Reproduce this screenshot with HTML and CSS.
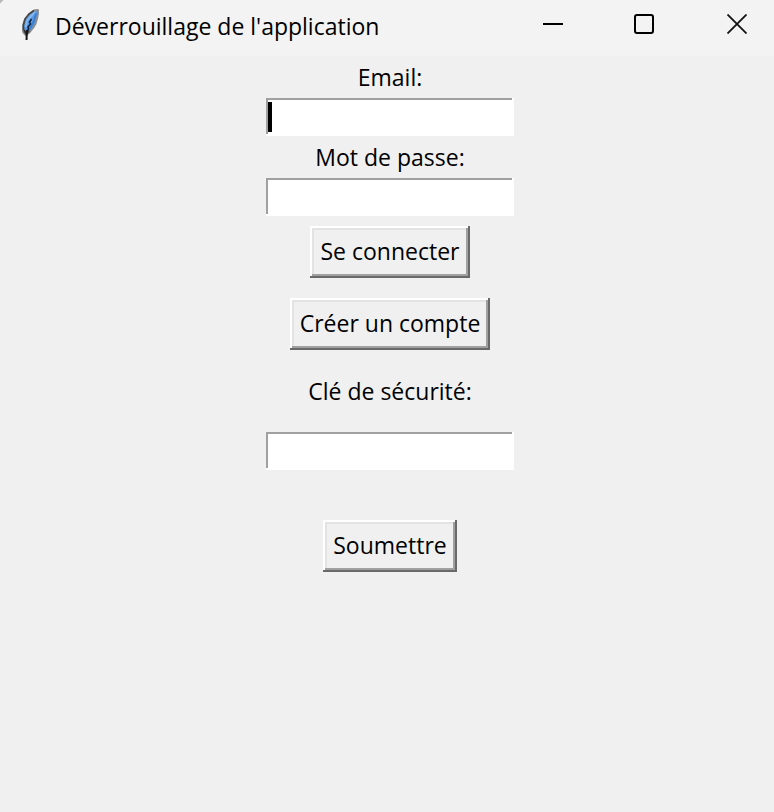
FILE: index.html
```html
<!DOCTYPE html>
<html lang="fr">
<head>
<meta charset="utf-8">
<title>Déverrouillage de l'application</title>
<link rel="stylesheet" href="styles.css">
</head>
<body>
<header class="titlebar">
  <svg class="feather" viewBox="0 0 20 34" width="20" height="34" aria-hidden="true">
    <path d="M18 3L14 3.500L9 7L5 12L3 18L3 25L5.500 28L9 26L13 21L15.500 17L17 12L18 7Z" fill="#5b9be3" stroke="#8b8b8b" stroke-width="1.800" stroke-linejoin="round"/>
    <path d="M14 3.500L9 7L5 12L3.500 18V23" fill="none" stroke="#444" stroke-width="1.600"/>
    <path d="M15.500 5L11 9L7 14L5.500 20" fill="none" stroke="#80b7f0" stroke-width="2"/>
    <path d="M16 6L14 14L11 20L8.500 23" fill="none" stroke="#3d7dcf" stroke-width="2"/>
    <path d="M11.500 12L9.500 15L10.500 17L8 20L8.500 22L6.500 25" fill="none" stroke="#13233b" stroke-width="1.600"/>
    <path d="M4 23L6 26.500L9 24" fill="none" stroke="#333" stroke-width="2"/>
    <path d="M7 23L6.500 33" fill="none" stroke="#151515" stroke-width="2"/>
  </svg>
  <h1 class="title">Déverrouillage de l'application</h1>
  <div class="controls">
    <button class="control minimize" type="button" aria-label="Réduire">
      <svg viewBox="0 0 20 20" width="20" height="20"><path d="M0 10H20" stroke="#000" stroke-width="2"/></svg>
    </button>
    <button class="control" type="button" aria-label="Agrandir">
      <svg viewBox="0 0 20 20" width="20" height="20"><rect x="1" y="1" width="18" height="18" rx="2" fill="none" stroke="#000" stroke-width="2"/></svg>
    </button>
    <button class="control close" type="button" aria-label="Fermer">
      <svg viewBox="0 0 20 20" width="20" height="20"><path d="M.5 .5L19.500 19.500M19.500 .5L.5 19.500" stroke="#111" stroke-width="1.800"/></svg>
    </button>
  </div>
</header>
<main class="content">
  <form class="form">
    <label class="label" for="email">Email:</label>
    <div class="field">
      <input class="entry" id="email" type="text">
      <span class="caret"></span>
    </div>
    <label class="label" for="password">Mot de passe:</label>
    <input class="entry" id="password" type="password">
    <button class="button login" type="button">Se connecter</button>
    <button class="button register" type="button">Créer un compte</button>
  </form>
  <form class="form">
    <label class="label key-label" for="key">Clé de sécurité:</label>
    <input class="entry" id="key" type="text">
    <button class="button submit" type="button">Soumettre</button>
  </form>
</main>
</body>
</html>
```
FILE: styles.css
```css
* {
  box-sizing: border-box;
}

body {
  margin: 0;
  min-height: 100vh;
  background: #f0f0f0;
  color: #000;
  font-family: "Open Sans", "Noto Sans", sans-serif;
  font-size: 23px;
  line-height: 32px;
}

.titlebar {
  display: flex;
  align-items: center;
  height: 56px;
  padding: 0 0 8px 20px;
  background: linear-gradient(135deg, #b8b8b8 2px, #f3f3f3 3px);
}

.feather {
  flex: none;
}

.title {
  flex: 1;
  margin: 4px 0 0 15px;
  font-size: 23px;
  font-weight: 400;
  white-space: nowrap;
}

.controls {
  display: flex;
}

.control {
  display: flex;
  align-items: center;
  justify-content: center;
  width: 92px;
  height: 48px;
  padding: 0;
  border: 0;
  background: transparent;
}

.minimize {
  width: 90px;
}

.close {
  width: 84px;
  padding-left: 10px;
}

.content {
  padding-left: 6px;
}

.form {
  display: flex;
  flex-direction: column;
  align-items: center;
}

.label {
  padding: 5px 0;
}

.field {
  position: relative;
  display: flex;
}

.entry {
  width: 248px;
  height: 38px;
  padding: 2px 4px;
  border: 0;
  border-radius: 0;
  outline: 0;
  background: #fff;
  box-shadow: inset -2px -2px #fff, inset 2px 2px #a0a0a0;
  font: inherit;
}

.caret {
  position: absolute;
  top: 4px;
  left: 2px;
  width: 4px;
  height: 30px;
  background: #000;
}

.button {
  height: 52px;
  padding: 0 10px 2px;
  border: 0;
  border-radius: 0;
  background: #f0f0f0;
  box-shadow:
    inset -2px -2px #696969,
    inset 2px 2px #fff,
    inset -4px -4px #a0a0a0,
    inset 4px 4px #e3e3e3;
  color: inherit;
  font: inherit;
}

.login {
  margin-top: 10px;
}

.register {
  margin: 20px 0;
}

.key-label {
  padding-bottom: 25px;
}

.submit {
  margin-top: 50px;
}
```
